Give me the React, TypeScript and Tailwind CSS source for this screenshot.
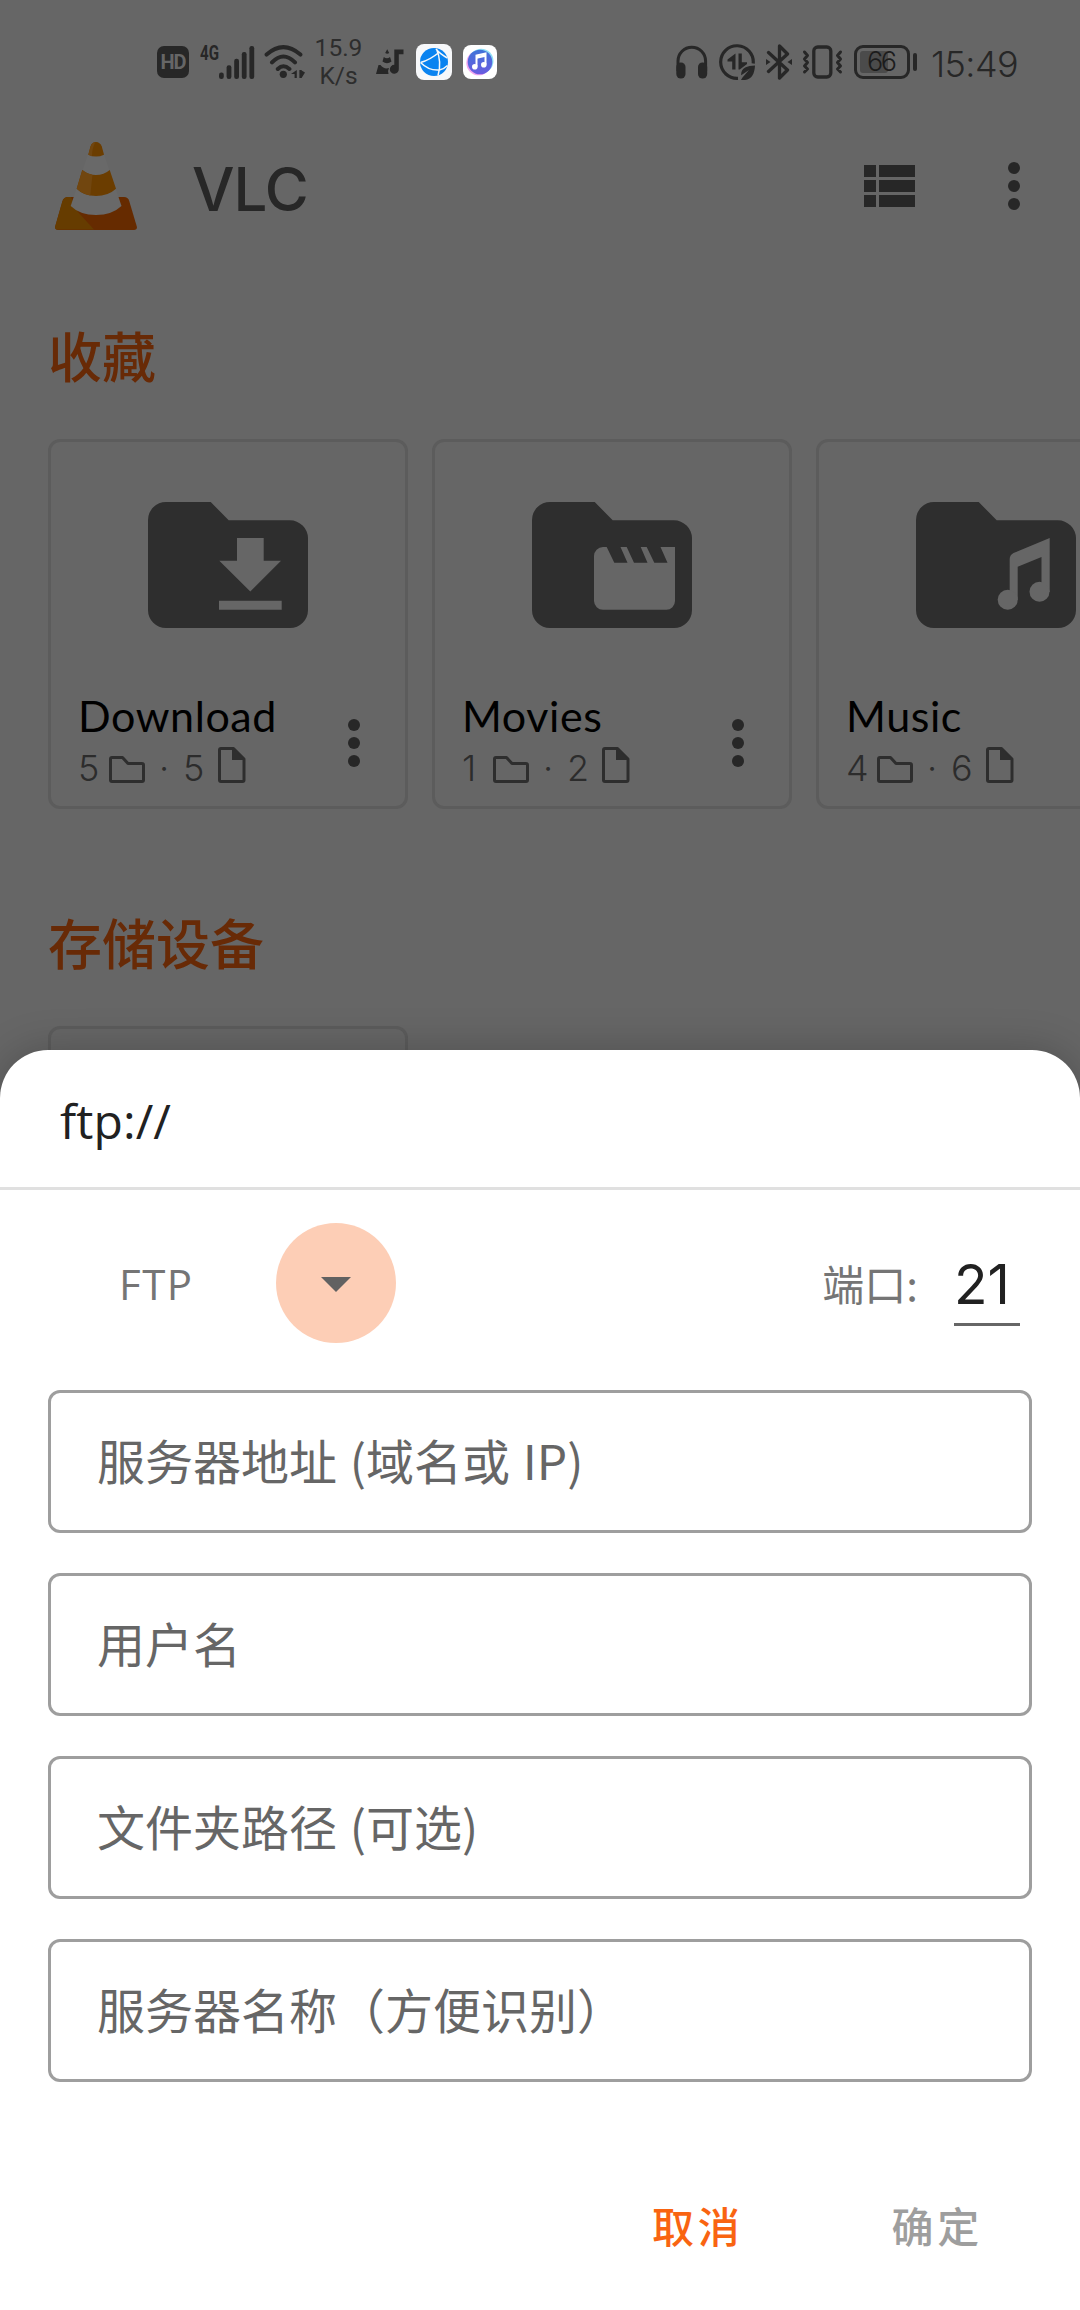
import React from "react";

const INK = "#272727";

function SignalBars() {
  const bars = [26.5, 19.3, 12.7, 6, 0];
  return (
    <svg width="36" height="33" viewBox="0 0 36 33" fill={INK}>
      {bars.map((top, i) => (
        <rect key={top} x={i * 7.6} y={top} width="4.8" height={33 - top} rx="2.2" />
      ))}
    </svg>
  );
}

function Wifi() {
  return (
    <svg width="42" height="34" viewBox="0 0 42 34" fill="none" stroke={INK} strokeWidth="4" strokeLinecap="round">
      <path d="M2.6 9.6Q19.3 -5.2 36.4 9.6M8 17.4Q19.3 5.5 31 17.4M13.8 24Q19.3 18.5 25.4 24" />
      <circle cx="19.3" cy="29.3" r="3.6" fill={INK} stroke="none" />
      <path d="M32.8 25v8h-2.2v-4H27zM35.4 33v-8h2.2v0.6l3.4 1.8-3.4 5.6z" fill={INK} stroke="none" />
    </svg>
  );
}

function ConeNote() {
  return (
    <svg width="28" height="26" viewBox="0 0 28 26" fill={INK}>
      <path d="M9.200 4L11.200 0.300 13.200 4Q11.200 5.400 9.200 4zM7.800 8Q11 10.500 14 8L15.500 12.500Q11 16 6.500 12.500zM2.500 16H4.500Q8 20.500 13 19 11.500 21.500 12.500 25H0z" />
      <path d="M18.300 0.500H27.500V5.200H22.800V20A4.500 4.500 0 1 1 18.300 15.800z" />
    </svg>
  );
}

function BrowserApp() {
  return (
    <svg width="36" height="36" viewBox="0 0 36 36">
      <rect width="36" height="36" rx="8" fill="#f7f8fa" />
      <circle cx="18" cy="18" r="14" fill="#0a83f0" />
      <g fill="none" stroke="#f7f8fa" strokeWidth="1.5">
        <path d="M20 5Q24 10 31.500 14M20.500 5Q26 18 22 31.500M4.500 18.500Q14 16 23.500 8M4.500 18.500Q13 27 23.500 26 28 25 31.500 21.500" />
      </g>
    </svg>
  );
}

function MusicApp() {
  return (
    <svg width="34" height="34" viewBox="0 0 34 34">
      <defs>
        <linearGradient id="music-app" x1="0" y1="0" x2="0" y2="1">
          <stop offset="0" stopColor="#3f74d8" />
          <stop offset="1" stopColor="#6a5be0" />
        </linearGradient>
      </defs>
      <rect width="34" height="34" rx="8" fill="#fff" />
      <circle cx="15.600" cy="18" r="12.300" fill="#f2a5ee" />
      <circle cx="18.200" cy="16" r="12.300" fill="#8fe0f5" />
      <circle cx="17" cy="17" r="12.300" fill="url(#music-app)" />
      <path d="M13.500 21.500V10.500L22.500 8.500V19.500" fill="none" stroke="#fff" strokeWidth="2" />
      <path d="M13.500 12.500L22.500 10.500" stroke="#fff" strokeWidth="2.500" />
      <circle cx="11.800" cy="21.800" r="2.800" fill="#fff" />
      <circle cx="20.800" cy="19.800" r="2.800" fill="#fff" />
    </svg>
  );
}

function Headphones() {
  return (
    <svg width="32" height="34" viewBox="0 0 32 34" fill={INK}>
      <path d="M2 26V16A13.800 13.800 0 0 1 29.600 16V26" fill="none" stroke={INK} strokeWidth="3" />
      <rect x="0.300" y="17.500" width="9.200" height="16" rx="4.500" />
      <rect x="22" y="17.500" width="9.200" height="16" rx="4.500" />
    </svg>
  );
}

function DataSaver() {
  return (
    <svg width="36" height="36" viewBox="0 0 36 36" fill={INK}>
      <path d="M19 34.300A16.300 16.300 0 1 1 34.200 19.500" fill="none" stroke={INK} strokeWidth="3.200" />
      <path d="M16.500 9.500V25.500H13.200V17.500H8.500V15.500zM19.500 9.500H22.800V18.300H28V20L20.800 25.500H19.500z" />
      <path d="M36 21.500C28 21.500 21.500 24.500 22.200 31.200L30 26 23.500 33.500 22 36C32 37 35.500 31 36 21.500z" />
    </svg>
  );
}

function Bluetooth() {
  return (
    <svg width="26" height="36" viewBox="0 0 26 36" fill={INK}>
      <path d="M2.500 8.500L21.500 26 13.500 34V2L21.500 10 2.500 27.500" fill="none" stroke={INK} strokeWidth="3.300" strokeLinejoin="round" strokeLinecap="round" />
      <path d="M0 15L4.500 18 0 21zM26 15L21.500 18 26 21z" />
    </svg>
  );
}

function Vibrate() {
  return (
    <svg width="41" height="34" viewBox="0 0 41 34" fill="none" stroke={INK} strokeWidth="3.300" strokeLinecap="round" strokeLinejoin="round">
      <rect x="11.800" y="2" width="17" height="30" rx="4" />
      <path d="M2.500 7L5.500 10.500 2.500 14 5.500 17.500 2.500 21 5.500 24 2.500 27M38.500 7L35.500 10.500 38.500 14 35.500 17.500 38.500 21 35.500 24 38.500 27" strokeWidth="3" />
    </svg>
  );
}

function Battery() {
  return (
    <div className="flex items-center">
      <div className="flex h-[34px] w-[56px] rounded-[9px] border-[3px] border-[#272727] p-[3px]">
        <div className="relative h-full w-[28px] rounded-[3px] bg-[#4b4b4b]">
          <span className="absolute top-[-1px] left-[7px] text-[27px] leading-[24px] font-light tracking-[-2.500px] text-[#1c1c1c] font-['Inter',sans-serif]">66</span>
        </div>
      </div>
      <div className="ml-[3px] h-[18px] w-[4px] rounded-full bg-[#272727]" />
    </div>
  );
}

function StatusBar() {
  return (
    <div className="flex h-[124px] items-center pl-[157px] text-[#272727]">
      <div className="flex h-[32px] w-[32px] items-center justify-center rounded-[7px] bg-[#272727] text-[20px] leading-none font-bold tracking-[-1px] text-[#666] font-['Roboto',sans-serif]">
        HD
      </div>
      <div className="ml-[11px] flex h-[34px] w-[19px] items-start">
        <span className="origin-left scale-x-[0.72] text-[21px] leading-[16px] font-bold font-['Roboto',sans-serif]">4G</span>
      </div>
      <SignalBars />
      <div className="ml-[9px]"><Wifi /></div>
      <div className="ml-[8px] flex w-[49px] flex-col items-center text-[24.500px] leading-[28.500px] text-[#2d2d2d] font-['Roboto',sans-serif]">
        <span>15.9</span>
        <span>K/s</span>
      </div>
      <div className="ml-[13px]"><ConeNote /></div>
      <div className="ml-[12px]"><BrowserApp /></div>
      <div className="ml-[11px]"><MusicApp /></div>
      <div className="ml-[179px]"><Headphones /></div>
      <div className="ml-[11px]"><DataSaver /></div>
      <div className="ml-[11px]"><Bluetooth /></div>
      <div className="ml-[10px]"><Vibrate /></div>
      <div className="ml-[11px]"><Battery /></div>
      <span className="ml-[14px] pt-[4px] text-[36px] leading-[40px] font-light tracking-[-0.600px] font-['Inter',sans-serif]">15:49</span>
    </div>
  );
}

function VlcCone() {
  return (
    <svg width="82" height="88" viewBox="0 0 82 88">
      <path d="M13 55H69Q73 55 74.200 59L81.800 84.500Q82.500 88 79 88H3Q-0.500 88 0.200 84.500L7.500 59Q9 55 13 55z" fill="#662b00" />
      <path d="M13 55H16L23 70 39 87.500H3Q-0.500 88 0.200 84.500L7.500 59Q9 55 13 55z" fill="#663c00" />
      <path d="M33 12L49 12 66.500 64Q57 73 41 73T15.700 64z" fill="#696969" />
      <path d="M33.300 12.700L35.500 4.500Q37 0 41 0T46.800 4.500L49 12.700Q41 16.500 33.300 12.700z" fill="#6b3d00" />
      <path d="M33.300 12.700L35.500 4.500Q37 0 40.500 0Q37 6 37 14.200Z" fill="#71460f" />
      <path d="M27.300 28Q33 33 41 33T54.700 28L61 46.700Q53 54 41 54T21.700 46.700z" fill="#6b3d00" />
      <path d="M27.300 28Q31 31.300 37.500 32.700L35.300 53.500Q27 52 21.700 46.700z" fill="#71460f" />
    </svg>
  );
}

function MoreDots() {
  return (
    <svg width="12" height="48" viewBox="0 0 12 48" fill={INK}>
      <circle cx="6" cy="6" r="6" />
      <circle cx="6" cy="24" r="6" />
      <circle cx="6" cy="42" r="6" />
    </svg>
  );
}

function ListIcon() {
  return (
    <svg width="51" height="42" viewBox="0 0 51 42" fill={INK}>
      {[0, 15, 30].map((y) => (
        <g key={y}>
          <rect y={y} width="12" height="12" />
          <rect x="15" y={y} width="36" height="12" />
        </g>
      ))}
    </svg>
  );
}

type Kind = "download" | "movies" | "music";

function FolderIcon({ kind }: { kind: Kind }) {
  return (
    <svg width="160" height="126" viewBox="16 32 160 126">
      <path d="M34 32H78.700L96.700 50.300H158A18 18 0 0 1 176 68V140A18 18 0 0 1 158 158H34A18 18 0 0 1 16 140V50A18 18 0 0 1 34 32z" fill="#2e2e2e" />
      {kind === "download" && (
        <path d="M105 68H131.700V90.700H149L118.300 121.500 87.300 90.700H105zM87 130.700H149.700V139.700H87z" fill="#666" />
      )}
      {kind === "movies" && (
        <path d="M87 77H90.700L98.300 92.700H111.500L104.500 77H110.700L118 92.700H131.500L124.700 77H130.700L138.300 92.700H151.500L144.500 77H159V131A8.700 8.700 0 0 1 150.300 139.700H87A9 9 0 0 1 78 131V86A9 9 0 0 1 87 77z" fill="#666" />
      )}
      {kind === "music" && (
        <g fill="#666">
          <path d="M109.700 130V89Q109.700 85 113.500 83L149.700 68V122H141.500V87L117.700 96.700V130z" />
          <circle cx="107.700" cy="129.700" r="10" />
          <circle cx="139.500" cy="121.700" r="10" />
        </g>
      )}
    </svg>
  );
}

function SmallFolder() {
  return (
    <svg width="36" height="27" viewBox="0 0 36 27" fill="none" stroke="#2e2e2e" strokeWidth="3" strokeLinejoin="round">
      <path d="M3 1.500H13.500L19 7.500H33Q34.500 7.500 34.500 9V24Q34.500 25.500 33 25.500H3Q1.500 25.500 1.500 24V3Q1.500 1.500 3 1.500z" />
    </svg>
  );
}

function SmallFile() {
  return (
    <svg width="28" height="36" viewBox="0 0 28 36">
      <path d="M3 1.500H15.500L26 12V33Q26 34.500 24.500 34.500H3Q1.500 34.500 1.500 33V3Q1.500 1.500 3 1.500z" fill="none" stroke="#2e2e2e" strokeWidth="3" strokeLinejoin="round" />
      <path d="M14 1.500L27 13H14z" fill="#2e2e2e" />
    </svg>
  );
}

interface Favourite {
  name: string;
  kind: Kind;
  folders: number;
  files: number;
}

const favourites: Favourite[] = [
  { name: "Download", kind: "download", folders: 5, files: 5 },
  { name: "Movies", kind: "movies", folders: 1, files: 2 },
  { name: "Music", kind: "music", folders: 4, files: 6 },
];

function FavouriteCard({ name, kind, folders, files }: Favourite) {
  return (
    <div className="flex h-[370px] w-[360px] shrink-0 flex-col rounded-[12px] border-[3px] border-[#5c5c5c]">
      <div className="mt-[60px] flex justify-center">
        <FolderIcon kind={kind} />
      </div>
      <div className="mt-[58px] flex justify-between pr-[45px] pl-[27px]">
        <div className="flex flex-col">
          <span className="text-[43px] leading-[60px] tracking-[0.600px] text-black font-['Lato',sans-serif]">{name}</span>
          <div className="mt-[-1px] flex h-[38px] items-end text-[36px] leading-[38px] font-light text-[#2c2c2c] font-['Inter',sans-serif]">
            <span className="mb-[-4px] w-[31px]">{folders}</span>
            <SmallFolder />
            <span className="mb-[-4px] w-[38px] text-center">·</span>
            <span className="mb-[-4px] w-[35px]">{files}</span>
            <SmallFile />
          </div>
        </div>
        <div className="mt-[33px]"><MoreDots /></div>
      </div>
    </div>
  );
}

function SectionTitle({ children }: { children: React.ReactNode }) {
  return (
    <h2 className="h-[72px] pl-[48px] text-[54px] leading-[68px] font-medium text-[#682a06] font-['Noto_Sans_CJK_SC',sans-serif]">
      {children}
    </h2>
  );
}

const fields = ["服务器地址 (域名或 IP)", "用户名", "文件夹路径 (可选)", "服务器名称（方便识别）"];

function ServerSheet() {
  return (
    <div className="absolute inset-x-0 bottom-0 h-[1260px] rounded-t-[48px] bg-white shadow-[0_0_42px_rgba(0,0,0,0.22)]">
      <div className="flex h-[140px] items-center border-b-[3px] border-[#e0e0e0] pt-[4px] pl-[60px]">
        <span className="text-[48px] leading-[60px] tracking-[0.100px] text-[#212121] font-['Open_Sans',sans-serif]">ftp://</span>
      </div>
      <div className="flex h-[186px] items-center pr-[60px] pl-[119px] text-[42px] text-[#757575]">
        <span className="w-[157px] pt-[2px] leading-[60px] tracking-[1.500px] font-['Open_Sans',sans-serif]">FTP</span>
        <div className="flex h-[120px] w-[120px] items-center justify-center rounded-full bg-[#fdceb6]">
          <svg width="30" height="15" viewBox="0 0 30 15" className="mt-[3px]" fill="#616161">
            <path d="M0 0H30L15 15z" />
          </svg>
        </div>
        <span className="ml-auto leading-[60px] font-['Noto_Sans_CJK_SC',sans-serif]">端口:</span>
        <div className="ml-[36px] flex h-[86px] w-[66px] items-center border-b-[3px] border-[#666] pt-[6px] text-[55px] text-[#212121] font-['Inter',sans-serif]">
          21
        </div>
      </div>
      <div className="mt-[14px] flex flex-col gap-[40px] px-[48px]">
        {fields.map((label) => (
          <div
            key={label}
            className="flex h-[143px] items-center rounded-[12px] border-[3px] border-[#9e9e9e] pb-[5px] pl-[46px] text-[48px] text-[#666] [word-spacing:2px] font-['Noto_Sans_CJK_SC',sans-serif]"
          >
            {label}
          </div>
        ))}
      </div>
      <div className="mt-[110px] flex justify-end gap-[148px] pr-[97px] text-[42px] leading-[66px] font-medium tracking-[3.750px] font-['Noto_Sans_CJK_SC',sans-serif]">
        <button className="text-[#f96411]">取消</button>
        <button className="text-[#9e9e9e]">确定</button>
      </div>
    </div>
  );
}

export default function App() {
  return (
    <div className="relative h-[2310px] w-[1080px] overflow-hidden bg-[#666]">
      <StatusBar />
      <div className="flex h-[124px] items-center pr-[60px] pl-[55px]">
        <VlcCone />
        <h1 className="ml-[55px] pt-[6px] text-[60px] leading-[72px] font-medium tracking-[-1px] text-[#272727] font-['Inter',sans-serif]">VLC</h1>
        <div className="ml-auto flex items-center gap-[93px]">
          <ListIcon />
          <MoreDots />
        </div>
      </div>
      <div className="pt-[73px]">
        <SectionTitle>收藏</SectionTitle>
        <div className="mt-[46px] flex gap-[24px] pl-[48px]">
          {favourites.map((f) => (
            <FavouriteCard key={f.name} {...f} />
          ))}
        </div>
      </div>
      <div className="pt-[99px]">
        <SectionTitle>存储设备</SectionTitle>
        <div className="mt-[46px] ml-[48px] h-[370px] w-[360px] rounded-[12px] border-[3px] border-[#5c5c5c]" />
      </div>
      <ServerSheet />
    </div>
  );
}
